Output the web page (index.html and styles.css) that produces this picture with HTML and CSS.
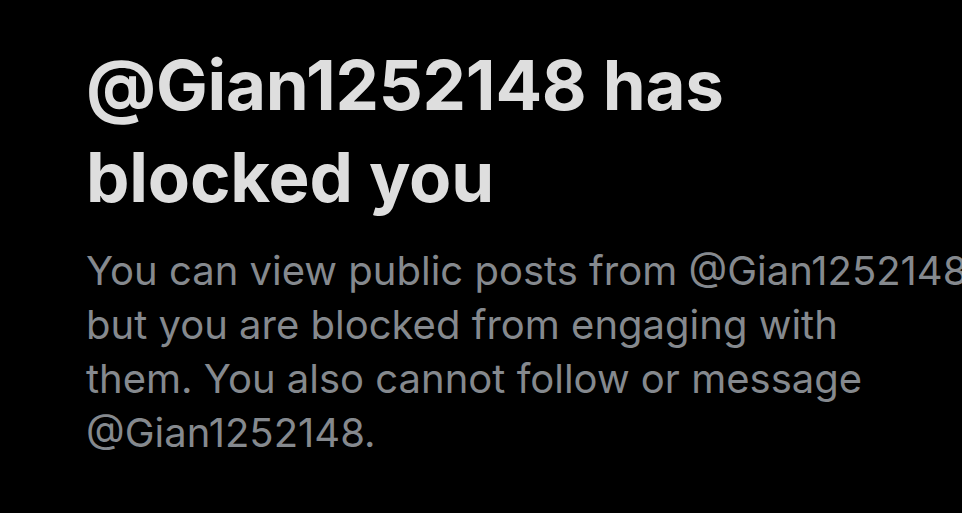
FILE: index.html
```html
<!DOCTYPE html>
<html>
  <head>
    <link rel="stylesheet" href="styles.css">
  </head>
  <body>
    <main class="blocked">
      <h1 class="blocked-title">@Gian1252148 has<br>blocked you</h1>
      <p class="blocked-text">
        You can view public posts from @Gian1252148,<br>
        but you are blocked from engaging with<br>
        them. You also cannot follow or message<br>
        @Gian1252148.
      </p>
    </main>
  </body>
</html>
```

FILE: styles.css
```css
* {
  margin: 0;
  padding: 0;
}

html, body {
  height: 100%;
  width: 100%;
  overflow: hidden;
}

body {
  background: #000;
  font-family: Inter, "Liberation Sans", Arial, sans-serif;
}

.blocked {
  padding: 39px 0 0 86px;
}

.blocked-title {
  color: #dedede;
  font-size: 69px;
  font-weight: 700;
  line-height: 92px;
  letter-spacing: -0.2px;
  white-space: nowrap;
}

.blocked-text {
  margin-top: 21px;
  color: #85898e;
  font-size: 40px;
  line-height: 54px;
  white-space: nowrap;
}
```
